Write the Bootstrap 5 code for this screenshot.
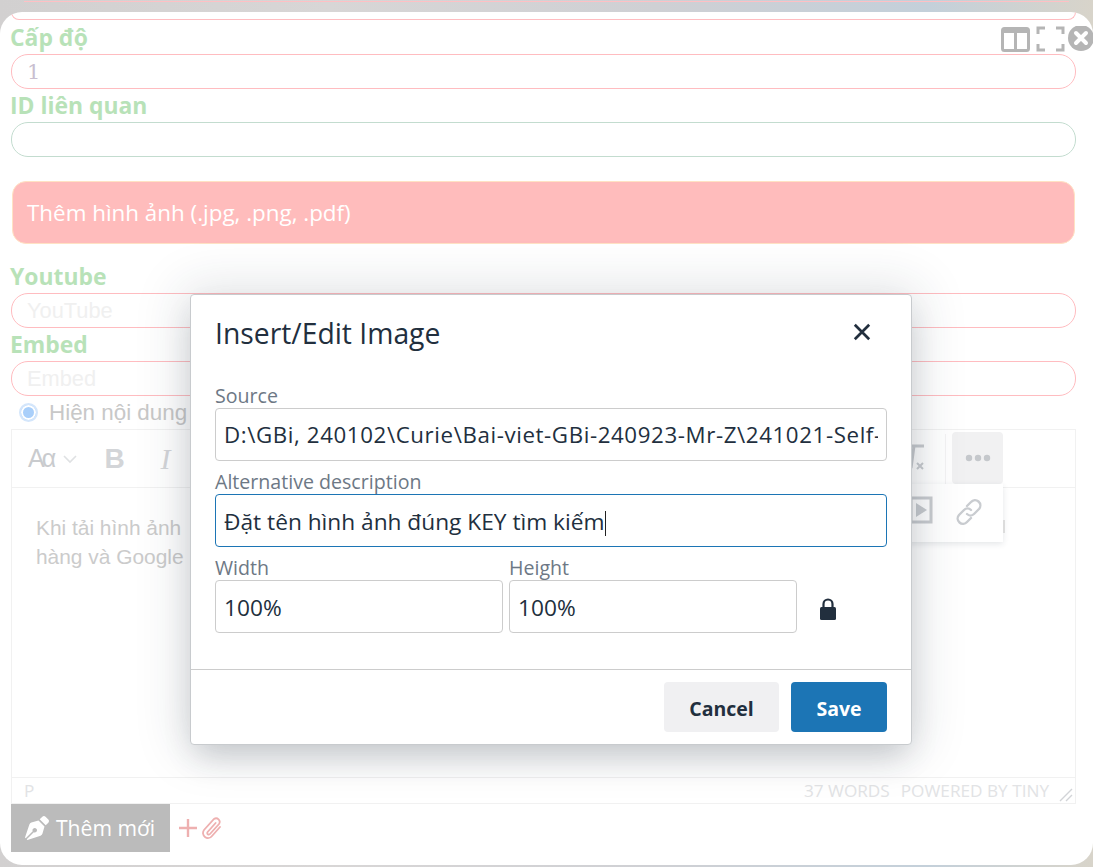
<!doctype html>
<html lang="vi"><head><meta charset="utf-8">
<link href="https://cdn.jsdelivr.net/npm/bootstrap@5.3.0/dist/css/bootstrap.min.css" rel="stylesheet">
<style>
html,body{height:867px;overflow:hidden}
body{position:relative;background:linear-gradient(90deg,#d2d0d0 0,#d8d6d6 30%,#cfd0d4 60%,#c4d0da 85%,#d8d4ca 100%);font-family:"Open Sans",sans-serif;padding-top:12px}
.topline{position:absolute;left:24px;right:24px;top:1px;height:1px;background:#ffc0c4}
.panel{height:853px;background:#fff;border-radius:22px;padding:0 17px 0 11px;overflow:hidden}
.stub{height:8px;border:1px solid #ffbcc0;border-top:0;border-radius:0 0 12px 12px;margin-bottom:1px}
.flabel{display:block;height:33px;margin:0 0 0 -1px;line-height:33px;font-family:"Open Sans",sans-serif;font-weight:700;font-size:22.9px;color:#b8e2b8}
.finput.form-control{height:35px;border-radius:17px;border:1px solid #ffbcc0;padding:0 15px;font-family:"Liberation Sans",sans-serif;font-size:21.8px;background:#fff;box-shadow:none}
.finput.gr.form-control{border-color:#c3dccf}
.finput::placeholder{color:#f0f0f0;opacity:1}
.finput.one.form-control{color:#c9bfd0;font-family:"DejaVu Serif",serif;font-size:21px}
.redbar{height:63px;margin:24px 0 16px 1px;width:1063px;background:#ffbcbc;border:1px solid #ffe2c4;border-radius:14px;color:#fff;font-family:"Open Sans",sans-serif;font-size:22.4px;padding-left:14px}
.radiorow{height:33px;color:#c8c8c8;font-size:22.4px;padding-left:8px;gap:11px;font-family:"Liberation Sans",sans-serif}
.rdot{width:19px;height:19px;border-radius:50%;border:2px solid #d4e6fb;background:#a9cffa;box-shadow:inset 0 0 0 2px #fff;flex:none}
.editor{height:375px;border:1px solid #f1f1f1;overflow:hidden;position:relative}
.tbar{height:58px;border-bottom:1px solid #f1f1f1;padding-left:16px;color:#cfd2d6}
.aa{font-family:"Liberation Sans",sans-serif;font-size:25px;letter-spacing:-3px;width:34px;color:#c9cbce}
.tb{font-family:"Liberation Sans",sans-serif;font-weight:700;font-size:28px;width:51px;text-align:center;color:#d3d5d8}
.tb.it{font-family:"Liberation Serif",serif;font-style:italic;font-weight:400;font-size:30px}
.clearf{position:absolute;left:889px;top:13px}
.tdiv{position:absolute;left:933px;top:4px;height:50px;width:1px;background:#f3f3f3}
.more{position:absolute;left:940px;top:2px;width:51px;height:52px;background:#f1f1f2;border-radius:4px}
.popup{position:absolute;left:700px;top:54px;width:291px;height:58px;background:#fff;box-shadow:0 2px 6px rgba(34,47,62,.12)}
.popic{position:absolute;top:12px}
.tick{position:absolute;left:991px;top:90px;width:2px;height:13px;background:#dcdcdc}
.ebody{padding:25px 24px;font-family:"Liberation Sans",sans-serif;font-size:20.9px;line-height:29px;color:#cbcbcb;height:289px;overflow:hidden;white-space:nowrap}
.stat{height:27px;border-top:1px solid #f1f1f1;color:#e2e3e5;font-family:"Open Sans",sans-serif;font-size:17.2px;padding:0 26px 0 12px;position:relative;line-height:26px}
.stat .wd{margin-right:11px}
.grip{position:absolute;right:2px;bottom:2px}
.addbtn.btn{width:159px;height:48px;border-radius:0;border:0;background:#bbb;color:#fff;font-family:"Open Sans",sans-serif;font-size:21.1px;padding:0 0 0 14px;gap:7px}
.plus{margin:0 6px 0 8px}
.ticons{position:absolute;top:26px;left:1001px}
.dlg{position:absolute;left:190px;top:294px;width:722px;height:451px;background:#fff;border:1px solid #c8cbce;border-radius:4px;box-shadow:0 16px 30px -6px rgba(34,47,62,.2),0 0 50px 8px rgba(34,47,62,.13);padding:0}
.dhead{height:76px;padding:0 24px;color:#222f3e}
.dtitle{font-size:28.3px;margin:0;font-weight:400;font-family:"Open Sans",sans-serif;line-height:76px}
.dbody{padding:12px 24px 0;height:299px;border-bottom:1px solid #ccc}
.dlab{display:block;margin:0;font-size:19.6px;line-height:25px;color:#6d7885;height:25px}
.dinp.form-control{height:53px;border:1px solid #ccc;border-radius:4px;padding:2px 8px 0;font-size:22.7px;color:#222f3e;font-family:"Open Sans",sans-serif;box-shadow:none;display:block;white-space:nowrap;overflow:hidden;line-height:53px}
.dinp.src.form-control{font-size:22.3px;letter-spacing:.6px;padding-top:0}
.dinp.foc.form-control{border-color:#1c75b5;padding-top:0}
.caret{display:inline-block;width:1px;height:25px;background:#222;vertical-align:-6px}
.gapb{margin-bottom:8px}
.dfoot{padding:12px 24px 0;gap:12px}
.dbtn.btn{height:50px;border-radius:4px;border:0;font-weight:700;font-size:19.5px;font-family:"Open Sans",sans-serif;padding:3px 0 0}
.cancel.btn{width:115px;background:#f0f0f2;color:#222f3e}
.save.btn{width:96px;background:#1c75b5;color:#fff}
</style></head>
<body>
<div class="topline"></div>
<main class="panel">
  <div class="stub"></div>
  <label class="flabel">Cấp độ</label>
  <input class="finput one form-control" value="1">
  <label class="flabel">ID liên quan</label>
  <input class="finput gr form-control" value="">
  <div class="redbar d-flex align-items-center">Thêm hình ảnh (.jpg, .png, .pdf)</div>
  <label class="flabel">Youtube</label>
  <input class="finput form-control" placeholder="YouTube">
  <label class="flabel">Embed</label>
  <input class="finput form-control" placeholder="Embed">
  <div class="radiorow d-flex align-items-center"><span class="rdot"></span><span>Hiện nội dung</span></div>
  <div class="editor">
    <div class="tbar d-flex align-items-center">
      <span class="aa">Aα</span>
      <svg width="16" height="10" viewBox="0 0 16 10" class="me-3"><path d="M2 2l6 6 6-6" fill="none" stroke="#dfe1e3" stroke-width="1.6"/></svg>
      <span class="tb" style="margin-left:-5px">B</span><span class="tb it">I</span>
    </div>
    <svg class="clearf" width="28" height="30" viewBox="0 0 28 30"><path d="M4 3h19M13 3l-3 22" fill="none" stroke="#c9ccd0" stroke-width="3"/><path d="M16 20l6 6m0-6l-6 6" stroke="#c9ccd0" stroke-width="2"/></svg>
    <div class="tdiv"></div>
    <div class="more d-flex align-items-center justify-content-center">
      <svg width="26" height="8" viewBox="0 0 26 8"><g fill="#c5c8cc"><circle cx="4" cy="4" r="3.2"/><circle cx="13" cy="4" r="3.2"/><circle cx="22" cy="4" r="3.2"/></g></svg>
    </div>
    <div class="popup">
      <svg class="popic" style="left:197px;top:12px" width="24" height="28" viewBox="0 0 24 28"><path d="M2 2h20v24H2z" fill="none" stroke="#c9ccd0" stroke-width="3"/><path d="M7 7l11 7-11 7z" fill="#c9ccd0"/></svg>
      <svg class="popic" style="left:243px;top:14px" width="28" height="28" viewBox="0 0 28 28"><g fill="none" stroke="#c9ccd0" stroke-width="2.4" stroke-linecap="round"><path d="M12 8l4-4a5 5 0 0 1 8 7l-5 5a5 5 0 0 1-7 0"/><path d="M16 20l-4 4a5 5 0 0 1-8-7l5-5a5 5 0 0 1 7 0"/></g></svg>
    </div>
    <div class="tick"></div>
    <div class="ebody">Khi tải hình ảnh<br>hàng và Google</div>
    <div class="stat d-flex justify-content-between">
      <span>P</span>
      <span><span class="wd">37 WORDS</span>POWERED BY TINY</span>
      <svg class="grip" width="14" height="14" viewBox="0 0 14 14"><path d="M1 13L13 1M7 13l6-6" stroke="#d2d4d7" stroke-width="1.4"/></svg>
    </div>
  </div>
  <div class="d-flex align-items-center">
    <button class="addbtn btn d-flex align-items-center" type="button">
      <svg width="24" height="24" viewBox="0 0 512 512" fill="#fff"><path d="M136.6 138.79a64.003 64.003 0 0 0-43.31 41.35L0 460l14.69 14.69L164.8 324.58c-2.99-6.26-4.8-13.18-4.8-20.58 0-26.51 21.49-48 48-48s48 21.49 48 48-21.49 48-48 48c-7.4 0-14.32-1.81-20.58-4.8L37.31 497.31 52 512l279.86-93.29a64.003 64.003 0 0 0 41.35-43.31L416 224 288 96l-151.4 42.79zm361.34-64.62l-60.11-60.11c-18.75-18.75-49.16-18.75-67.91 0l-56.55 56.55 128.02 128.02 56.55-56.55c18.75-18.75 18.75-49.15 0-67.91z"/></svg>
      <span>Thêm mới</span>
    </button>
    <svg class="plus" width="20" height="20" viewBox="0 0 20 20"><path d="M10 1v18M1 10h18" stroke="#eeb0b0" stroke-width="2.4"/></svg>
    <svg width="20" height="24" viewBox="0 0 20 24" style="margin-left:-2px"><path d="M18 11l-8 9a5 5 0 0 1-8-6l10-11a3.6 3.6 0 0 1 5 5l-9 10a1.5 1.5 0 0 1-2.400-2l8-9" fill="none" stroke="#eeb0b0" stroke-width="1.8" stroke-linecap="round"/></svg>
  </div>
</main>
<svg class="ticons" width="92" height="26" viewBox="0 0 92 26">
  <rect x="1.5" y="2.500" width="26" height="22" rx="2" fill="none" stroke="#b5b5b5" stroke-width="3"/><path d="M1 2h27v5H1zM13 4h3v20h-3z" fill="#b5b5b5"/>
  <path d="M37 8V2h7M55 2h7v6M37 18v6h7M55 24h7v-6" fill="none" stroke="#b5b5b5" stroke-width="3"/>
  <circle cx="80" cy="12" r="13" fill="#b5b5b5"/><path d="M75 7l10 10m0-10L75 17" stroke="#fff" stroke-width="4" stroke-linecap="round"/>
</svg>
<section class="dlg">
  <div class="dhead d-flex align-items-center justify-content-between">
    <h5 class="dtitle">Insert/Edit Image</h5>
    <svg width="18" height="18" viewBox="0 0 20 20" style="margin-right:16px;margin-top:-2px"><path d="M2 2l16 16M18 2L2 18" stroke="#222f3e" stroke-width="3"/></svg>
  </div>
  <div class="dbody">
    <label class="dlab">Source</label>
    <input class="dinp src form-control gapb" value="D:\GBi, 240102\Curie\Bai-viet-GBi-240923-Mr-Z\241021-Self-Publishing\image.jpg">
    <label class="dlab">Alternative description</label>
    <div class="dinp foc form-control gapb">Đặt tên hình ảnh đúng KEY tìm kiếm<span class="caret"></span></div>
    <div class="d-flex align-items-end">
      <div class="me-1"><label class="dlab">Width</label><input class="dinp form-control" style="width:288px" value="100%"></div>
      <div style="margin-left:2px"><label class="dlab">Height</label><input class="dinp form-control" style="width:288px" value="100%"></div>
      <svg width="16" height="22" viewBox="0 0 16 22" style="margin:0 0 13px 23px"><path d="M3.500 10V6a4.500 4.500 0 0 1 9 0v4" fill="none" stroke="#222f3e" stroke-width="2.200"/><rect x="0" y="9" width="16" height="13" rx="1.500" fill="#222f3e"/></svg>
    </div>
  </div>
  <div class="dfoot d-flex justify-content-end">
    <button class="dbtn cancel btn" type="button">Cancel</button>
    <button class="dbtn save btn" type="button">Save</button>
  </div>
</section>
</body></html>
